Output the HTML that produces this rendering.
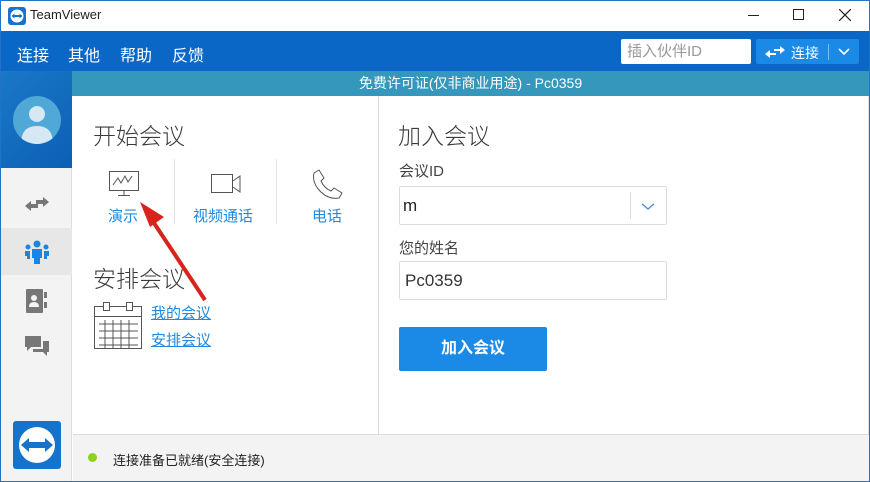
<!DOCTYPE html>
<html><head><meta charset="utf-8"><style>
*{margin:0;padding:0;box-sizing:border-box}
body{width:870px;height:482px;overflow:hidden;font-family:"Liberation Sans","Noto Sans CJK SC",sans-serif;background:#fff;position:relative}
.abs{position:absolute}
.win{left:0;top:0;width:870px;height:482px;border:1px solid #1f73c9;}
.title{left:1px;top:1px;width:868px;height:30px;background:#fff}
.menu{left:1px;top:31px;width:868px;height:40px;background:#0b67c5}
.lic{left:72px;top:71px;width:797px;height:25px;background:#3597bb;color:#fff;font-size:14px;line-height:25px;text-align:center;padding-left:0}
.side{left:1px;top:71px;width:71px;height:410px;background:#f3f3f3;border-right:1px solid #ddd}
.avatarbg{left:1px;top:71px;width:71px;height:97px;background:linear-gradient(135deg,#1a78c8,#0d5fb5)}
.status{left:73px;top:434px;width:796px;height:47px;background:#f3f3f3;border-top:1px solid #ddd}
.t{color:#444}
.h{color:#3a3a3a;font-weight:300}
a{color:#1f8ae0;text-decoration:underline}
.blue{color:#1f8ae0}
.inp{border:1px solid #d8dde2;background:#fff;border-radius:2px}
</style></head><body>
<div class="abs win"></div>
<div class="abs title"></div>
<svg class="abs" style="left:8px;top:7px" width="18" height="18" viewBox="0 0 18 18"><rect width="18" height="18" rx="3" fill="#1473cc"/><circle cx="9" cy="9" r="6.5" fill="#fff"/><path d="M3.5 9 L6.5 6.5 V8 H11.5 V6.5 L14.5 9 L11.5 11.5 V10 H6.5 V11.5Z" fill="#1473cc"/></svg>
<div class="abs" style="left:30px;top:7px;font-size:13px;color:#222">TeamViewer</div>
<div class="abs" style="left:748px;top:15px;width:11px;height:1px;background:#222"></div>
<div class="abs" style="left:793px;top:9px;width:11px;height:11px;border:1px solid #222"></div>
<svg class="abs" style="left:839px;top:9px" width="12" height="12"><path d="M0 0L12 12M12 0L0 12" stroke="#222" stroke-width="1.2"/></svg>
<div class="abs menu"></div>
<div class="abs" style="left:17px;top:42px;font-size:16px;color:#fff;word-spacing:0">连接</div>
<div class="abs" style="left:68px;top:42px;font-size:16px;color:#fff">其他</div>
<div class="abs" style="left:120px;top:42px;font-size:16px;color:#fff">帮助</div>
<div class="abs" style="left:172px;top:42px;font-size:16px;color:#fff">反馈</div>
<div class="abs" style="left:621px;top:39px;width:130px;height:25px;background:#fff;border-radius:2px;font-size:15px;color:#999;line-height:25px;padding-left:6px">插入伙伴ID</div>
<div class="abs" style="left:756px;top:39px;width:103px;height:25px;background:#1a8ae6;border-radius:2px"></div>
<svg class="abs" style="left:765px;top:45px" width="20" height="14" viewBox="0 0 20 14"><path d="M0 9 L5 5 V8 H11 V10 H5 V13Z M20 5 L15 1 V4 H9 V6 H15 V9Z" fill="#fff"/></svg>
<div class="abs" style="left:791px;top:43px;font-size:14px;color:#fff">连接</div>
<div class="abs" style="left:828px;top:44px;width:1px;height:16px;background:#7bbff2"></div>
<svg class="abs" style="left:838px;top:48px" width="12" height="8"><path d="M1 1L6 6L11 1" stroke="#fff" stroke-width="1.6" fill="none"/></svg>
<div class="abs lic">免费许可证(仅非商业用途) - Pc0359</div>
<div class="abs side"></div>
<div class="abs avatarbg"></div>
<svg class="abs" style="left:13px;top:96px" width="48" height="48" viewBox="0 0 48 48"><circle cx="24" cy="24" r="24" fill="#4fa8d6"/><clipPath id="c"><circle cx="24" cy="24" r="24"/></clipPath><g clip-path="url(#c)" fill="#d5e8f3"><circle cx="24" cy="18" r="8"/><path d="M8 48 Q8 30 24 30 Q40 30 40 48Z"/></g></svg>
<svg class="abs" style="left:25px;top:196px" width="24" height="16" viewBox="0 0 24 16"><path d="M0 10 L6 5 V8 H13 V12 H6 V15Z M24 6 L18 1 V4 H11 V8 H18 V11Z" fill="#777"/></svg>
<div class="abs" style="left:1px;top:228px;width:71px;height:47px;background:#e7e7e7"></div>
<svg class="abs" style="left:24px;top:240px" width="26" height="24" viewBox="0 0 26 24" fill="#1a86e0"><circle cx="13" cy="4" r="3.5"/><circle cx="4" cy="7" r="2.5"/><circle cx="22" cy="7" r="2.5"/><path d="M8 9h10v9h-2v6h-6v-6H8z"/><path d="M1 11h5v8H3v-3H1z M25 11h-5v8h3v-3h2z"/></svg>
<svg class="abs" style="left:26px;top:289px" width="22" height="24" viewBox="0 0 22 24" fill="#777"><rect x="0" y="0" width="17" height="24" rx="1"/><rect x="18" y="3" width="3" height="6"/><rect x="18" y="13" width="3" height="6"/><circle cx="8" cy="9" r="3" fill="#f3f3f3"/><path d="M3 18 Q3 13 8 13 Q13 13 13 18Z" fill="#f3f3f3"/></svg>
<svg class="abs" style="left:25px;top:336px" width="24" height="22" viewBox="0 0 24 22" fill="#777"><path d="M0 0h16v11H6l-4 4v-4H0z"/><path d="M18 5h6v11h-2v4l-4-4H8v-3h10z"/></svg>
<svg class="abs" style="left:13px;top:421px" width="48" height="48" viewBox="0 0 48 48"><rect width="48" height="48" rx="3" fill="#1473cc"/><circle cx="24" cy="24" r="18" fill="#fff"/><path d="M8 24 L16 17 V21 H32 V17 L40 24 L32 31 V27 H16 V31Z" fill="#1473cc"/></svg>
<div class="abs" style="left:378px;top:96px;width:1px;height:338px;background:#ddd"></div>
<div class="abs h" style="left:93px;top:117px;font-size:23px">开始会议</div>
<svg class="abs" style="left:108px;top:170px" width="32" height="28" viewBox="0 0 32 28" fill="none" stroke="#555"><rect x="1.5" y="1.5" width="29" height="19"/><path d="M5 15 L10 8 L13 13 L17 6 L20 12 L24 6" /><path d="M16 20.5V25M10 25.5H22"/></svg>
<div class="abs blue" style="left:108px;top:205px;font-size:15px">演示</div>
<div class="abs" style="left:174px;top:159px;width:1px;height:65px;background:#e3e3e3"></div>
<svg class="abs" style="left:210px;top:173px" width="32" height="22" viewBox="0 0 32 22" fill="none" stroke="#555"><rect x="1.5" y="1.5" width="21" height="18"/><path d="M23 8 L30 3 V19 L23 14"/></svg>
<div class="abs blue" style="left:193px;top:205px;font-size:15px">视频通话</div>
<div class="abs" style="left:276px;top:159px;width:1px;height:65px;background:#e3e3e3"></div>
<svg class="abs" style="left:311px;top:169px" width="32" height="32" viewBox="0 0 32 32" fill="none" stroke="#555"><path d="M3 4 L8 1 L13 9 L10 12 Q13 19 20 22 L23 19 L31 24 L28 29 Q17 31 8 21 Q1 13 3 4Z"/></svg>
<div class="abs blue" style="left:312px;top:205px;font-size:15px">电话</div>
<div class="abs h" style="left:93px;top:260px;font-size:23px">安排会议</div>
<svg class="abs" style="left:93px;top:300px" width="50" height="50" viewBox="0 0 50 50" fill="none" stroke="#555"><rect x="1.5" y="6.5" width="47" height="42"/><path d="M1.5 16.5H48.5"/><rect x="10.5" y="2.5" width="6" height="8" fill="#fff"/><rect x="33.5" y="2.5" width="6" height="8" fill="#fff"/><path d="M6 24H45M6 31H45M6 38H45M6 45H45M12 20V48M20 20V48M28 20V48M36 20V48"/></svg>
<a class="abs" style="left:151px;top:302px;font-size:15px">我的会议</a>
<a class="abs" style="left:151px;top:329px;font-size:15px">安排会议</a>
<svg class="abs" style="left:130px;top:195px" width="90" height="110" viewBox="0 0 90 110"><path d="M75 105 L22 25" stroke="#d8231c" stroke-width="4"/><path d="M10 7 L34 22 L20 32Z" fill="#d8231c"/></svg>
<div class="abs h" style="left:398px;top:117px;font-size:23px">加入会议</div>
<div class="abs t" style="left:399px;top:160px;font-size:15px">会议ID</div>
<div class="abs inp" style="left:399px;top:186px;width:268px;height:39px"></div>
<div class="abs" style="left:403px;top:196px;font-size:17px;color:#222">m</div>
<div class="abs" style="left:630px;top:192px;width:1px;height:27px;background:#cfdcea"></div>
<svg class="abs" style="left:641px;top:203px" width="14" height="8"><path d="M1 1L7 6L13 1" stroke="#4a8fd0" stroke-width="1.4" fill="none"/></svg>
<div class="abs t" style="left:399px;top:237px;font-size:15px">您的姓名</div>
<div class="abs inp" style="left:399px;top:261px;width:268px;height:39px"></div>
<div class="abs" style="left:405px;top:271px;font-size:17px;color:#333">Pc0359</div>
<div class="abs" style="left:399px;top:327px;width:148px;height:44px;background:#1a8ae6;border-radius:2px;color:#fff;font-size:16px;font-weight:bold;text-align:center;line-height:44px">加入会议</div>
<div class="abs status"></div>
<div class="abs" style="left:88px;top:453px;width:9px;height:9px;border-radius:50%;background:#8ed120"></div>
<div class="abs" style="left:113px;top:450px;font-size:13px;color:#222">连接准备已就绪(安全连接)</div>
<div class="abs" style="left:868px;top:96px;width:1px;height:338px;background:#ddd"></div>
</body></html>
